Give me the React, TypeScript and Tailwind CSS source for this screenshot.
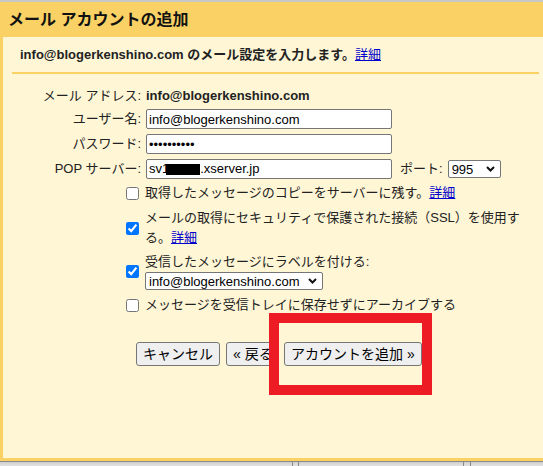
import React from "react";

const FONT = "font-['Liberation_Sans','Noto_Sans_CJK_JP',sans-serif]";

function Chevron() {
  return (
    <svg width="9" height="6" viewBox="0 0 9 6" className="shrink-0">
      <path d="M1 1 L4.5 4.5 L8 1" fill="none" stroke="#111" strokeWidth="2" />
    </svg>
  );
}

function FakeSelect({ value, width }: { value: string; width: string }) {
  return (
    <div
      className={`${width} flex h-[18px] items-center justify-between rounded-[2px] border border-[#767676] bg-white pl-[3px] pr-[5px] text-[13px] leading-none text-black`}
    >
      <span>{value}</span>
      <Chevron />
    </div>
  );
}

function FormRow({ label, children, top }: { label: string; children: React.ReactNode; top: string }) {
  return (
    <div className={`${top} flex h-[20px] items-center gap-[5px]`}>
      <div className="w-[138px] text-right text-[13px] text-[#222]">{label}</div>
      {children}
    </div>
  );
}

function Detail() {
  return <a className="text-[#0000cc] underline">詳細</a>;
}

export default function App() {
  const inputCls =
    "h-[20px] w-[246px] rounded-[2px] border border-[#767676] bg-white px-[2px] text-[13px] text-black outline-none";

  return (
    <div className={`flex h-[466px] w-[543px] flex-col overflow-hidden bg-[#d6d6d6] ${FONT}`}>
      <div className="h-[2px] bg-[#c8c8c8]" />

      {/* dialog frame */}
      <div className="relative flex h-[459px] flex-col bg-[#fad165] pb-[3px] pl-[3px]">
        <div className="flex h-[35px] items-center pl-[5px] text-[16px] font-bold text-[#111]">
          メール アカウントの追加
        </div>

        <div className="flex-1 bg-[#fff6d6] text-[#222]">
          <div className="pl-[17px] pt-[10px] text-[13px] leading-[16px]">
            <b>info@blogerkenshino.com のメール設定を入力します。</b>
            <Detail />
          </div>
          <div className="ml-[9px] mr-[4px] mt-[9px] h-[2px] bg-[#fad165]" />

          <FormRow label="メール アドレス:" top="mt-[12px]">
            <span className="text-[13px] font-bold">info@blogerkenshino.com</span>
          </FormRow>
          <FormRow label="ユーザー名:" top="mt-[3px]">
            <input className={inputCls} defaultValue="info@blogerkenshino.com" readOnly />
          </FormRow>
          <FormRow label="パスワード:" top="mt-[5px]">
            <input type="password" className={inputCls} defaultValue="abcdefghij" readOnly />
          </FormRow>
          <FormRow label="POP サーバー:" top="mt-[5px]">
            <div className={`${inputCls} flex items-center whitespace-nowrap`}>
              <span>sv1</span>
              <span className="-ml-[3px] inline-block h-[11px] w-[34px] bg-black" />
              <span>.xserver.jp</span>
            </div>
            <span className="ml-[3px] text-[13px]">ポート:</span>
            <FakeSelect value="995" width="w-[53px]" />
          </FormRow>

          {/* options */}
          <div className="mt-[4px] flex flex-col gap-[4px] pl-[123px] text-[13px] leading-[20px]">
            <label className="flex items-center gap-[6px]">
              <input type="checkbox" className="h-[13px] w-[13px] shrink-0" />
              <span>
                取得したメッセージのコピーをサーバーに残す。<Detail />
              </span>
            </label>
            <label className="mt-[1px] flex items-center gap-[6px]">
              <input type="checkbox" defaultChecked className="h-[13px] w-[13px] shrink-0" />
              <span>
                メールの取得にセキュリティで保護された接続（SSL）を使用す
                <br />
                る。<Detail />
              </span>
            </label>
            <label className="flex items-center gap-[6px]">
              <input type="checkbox" defaultChecked className="h-[13px] w-[13px] shrink-0" />
              <span className="flex flex-col">
                <span>受信したメッセージにラベルを付ける:</span>
                <FakeSelect value="info@blogerkenshino.com" width="w-[178px]" />
              </span>
            </label>
            <label className="mt-[1px] flex items-center gap-[6px]">
              <input type="checkbox" className="h-[13px] w-[13px] shrink-0" />
              <span>メッセージを受信トレイに保存せずにアーカイブする</span>
            </label>
          </div>

          {/* buttons */}
          <div className="ml-[133px] mt-[27px] flex gap-[6px] whitespace-nowrap text-[14px]">
            <button className="h-[24px] rounded-[3px] border border-[#767676] bg-[#efefef] px-[6px] text-black">
              キャンセル
            </button>
            <button className="h-[24px] w-[52px] rounded-[3px] border border-[#767676] bg-[#efefef] pl-[6px] text-left text-black">
              « 戻る
            </button>
            <button className="h-[24px] min-w-[134px] rounded-[3px] border border-[#767676] bg-[#efefef] px-[6px] text-black">
              アカウントを追加 »
            </button>
          </div>
        </div>

        {/* red annotation box */}
        <div className="absolute left-[269px] top-[311px] h-[82px] w-[163px] border-[10px] border-[#ed1c24]" />
      </div>

      {/* strip below the dialog */}
      <div className="h-[1px] bg-[#8a8a8a]" />
      <div className="flex h-[4px] bg-gradient-to-b from-[#cfcfcf] to-[#e2e2e2]">
        <div className="w-[292px]" />
        <div className="w-[1px] bg-[#8a8a8a]" />
        <div className="w-[5px]" />
        <div className="w-[1px] bg-[#8a8a8a]" />
        <div className="w-[164px]" />
        <div className="w-[1px] bg-[#8a8a8a]" />
        <div className="w-[6px]" />
        <div className="w-[1px] bg-[#8a8a8a]" />
      </div>
    </div>
  );
}
